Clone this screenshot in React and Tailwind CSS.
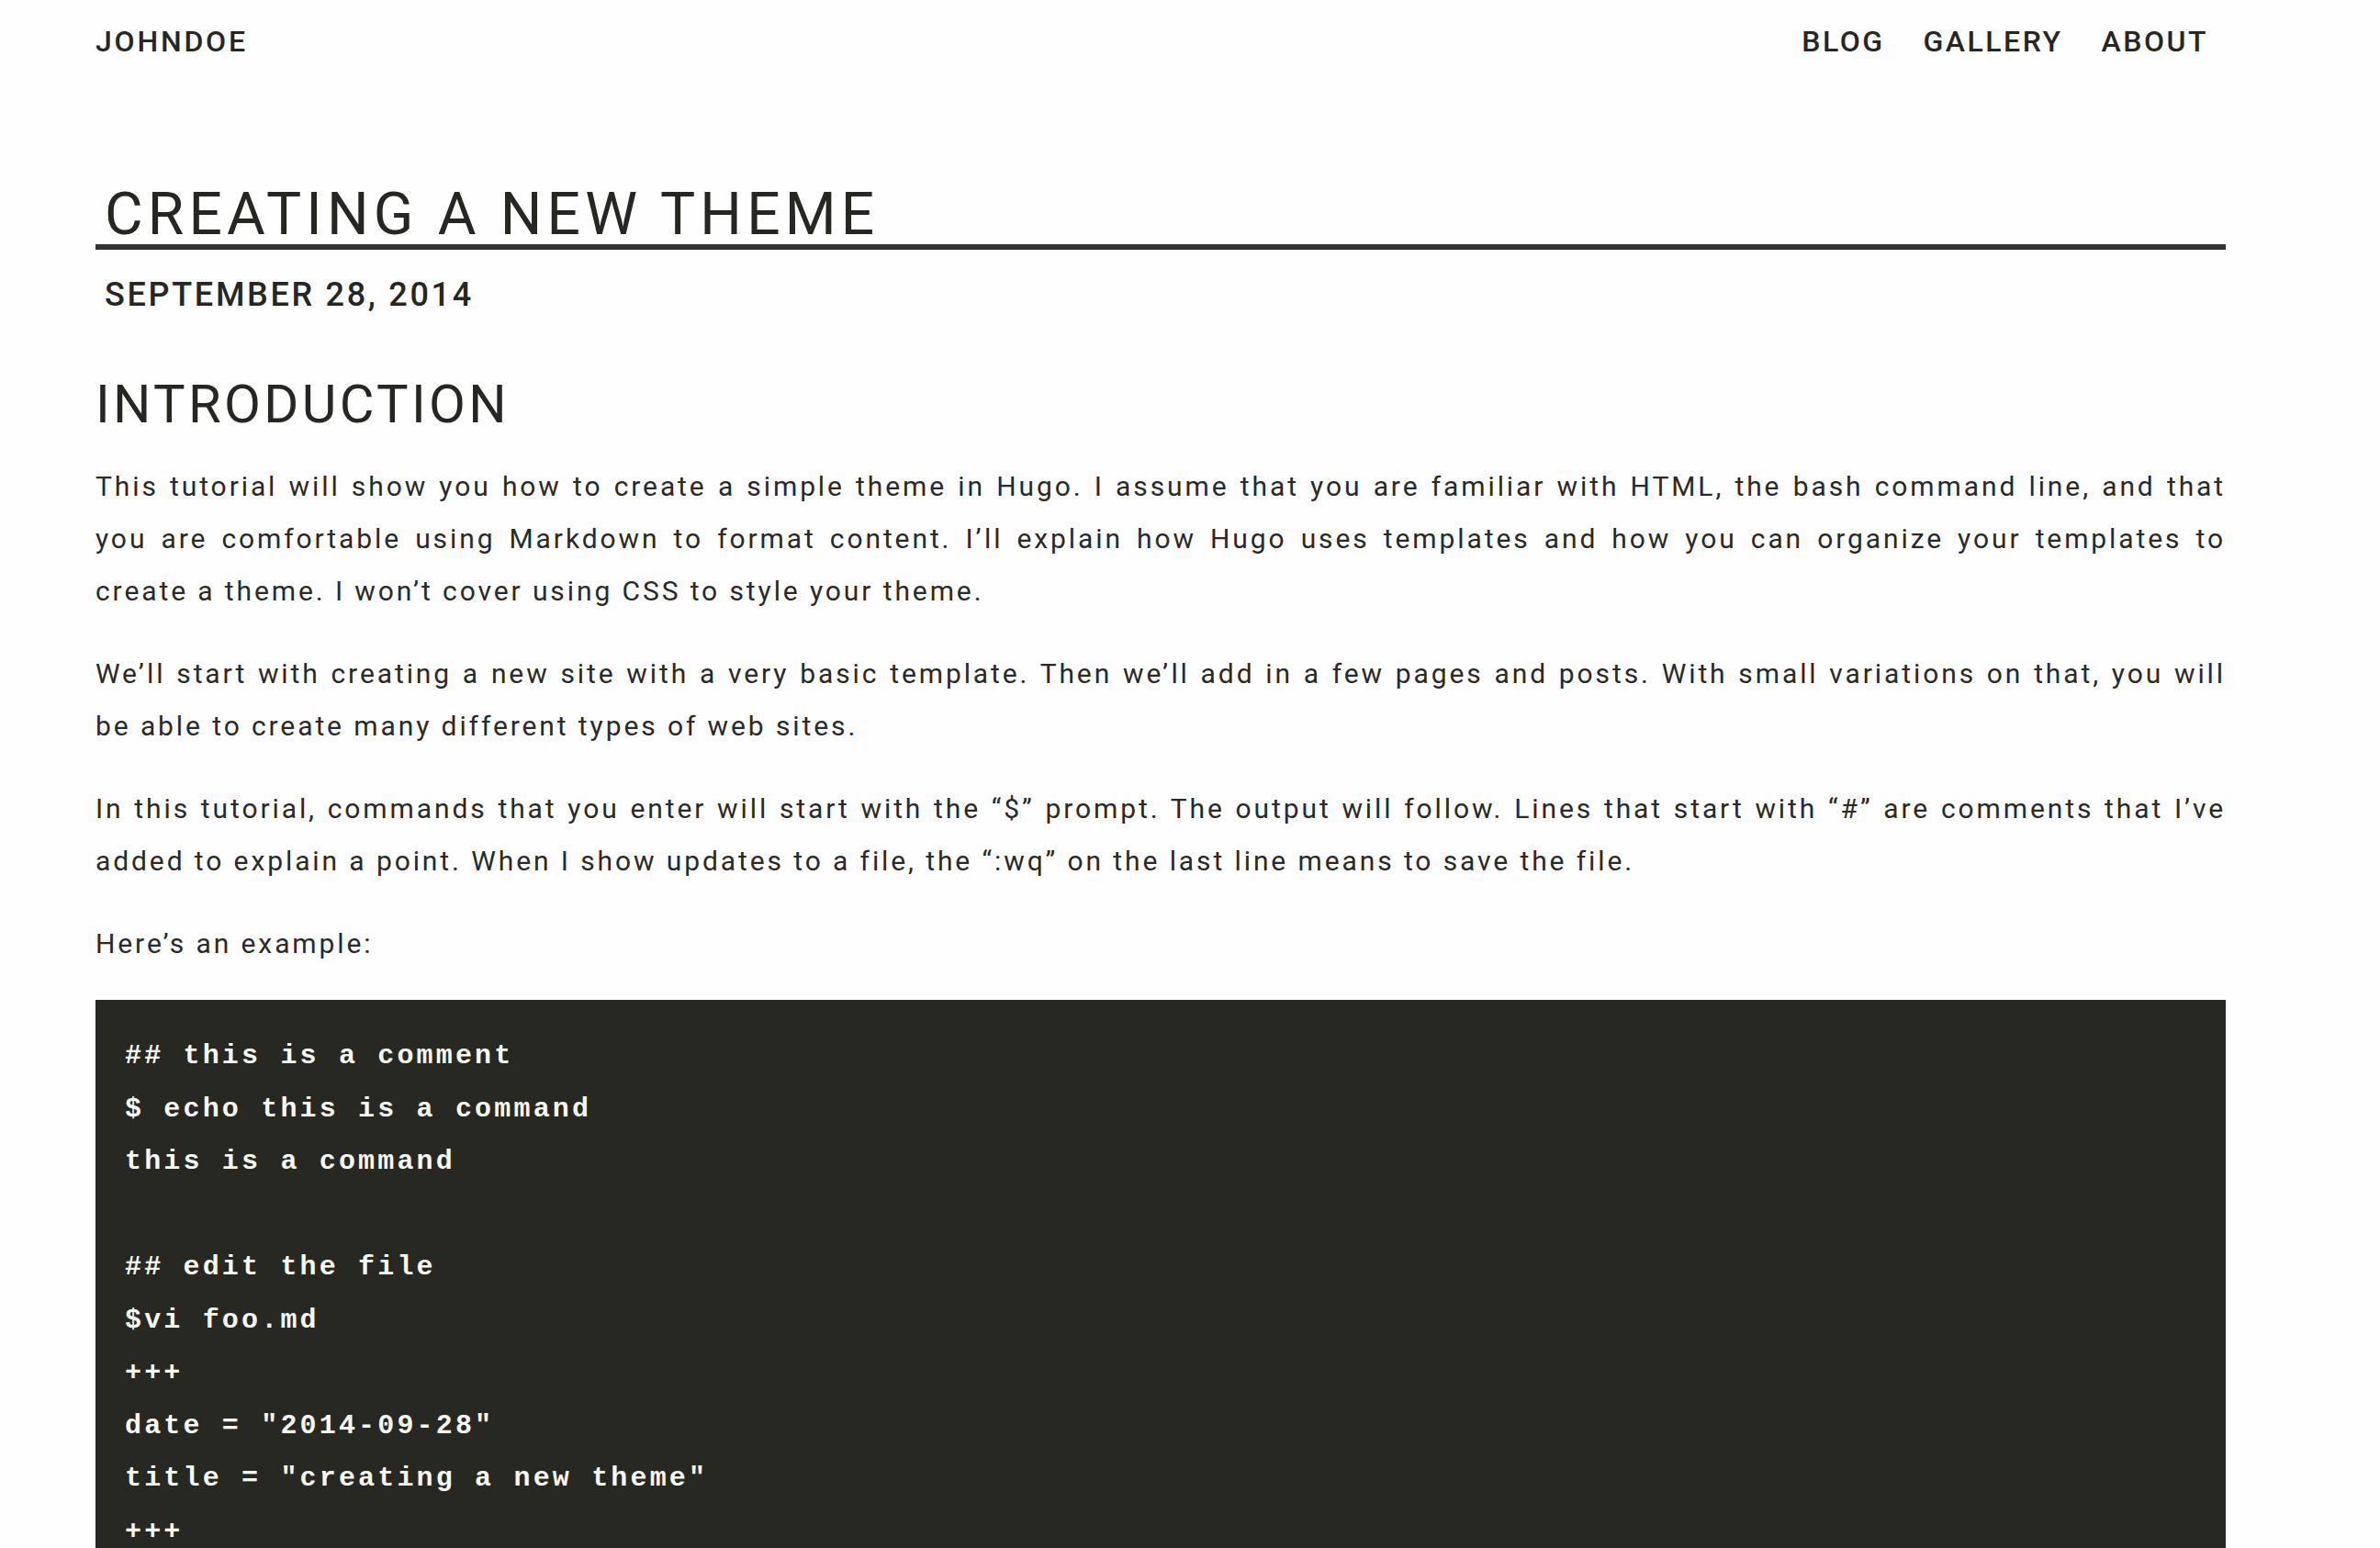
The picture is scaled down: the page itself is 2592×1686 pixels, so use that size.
import React from "react";

/* ==================== DATA ==================== */
const NAV = ["BLOG", "GALLERY", "ABOUT"];

const CODE = `## this is a comment
$ echo this is a command
this is a command

## edit the file
$vi foo.md
+++
date = "2014-09-28"
title = "creating a new theme"
+++`;

const FONT = { fontFamily: "Roboto, 'Liberation Sans', sans-serif" };

/* ==================== APP ==================== */
export default function App() {
  return (
    <div className="min-h-screen bg-[#fefefe] text-[#2a2a27]" style={FONT}>
      <div className="ml-[104px] w-[2320px] pb-20">
        {/* Header */}
        <header className="h-[90px] flex items-center justify-between pr-[19px]">
          <a className="text-[32px] font-medium tracking-[2.8px] leading-none text-[#262622]">
            JOHNDOE
          </a>
          <nav className="flex items-center gap-[42px]">
            {NAV.map((item) => (
              <a
                key={item}
                className="text-[32px] font-medium tracking-[2.5px] leading-none text-[#262622]"
              >
                {item}
              </a>
            ))}
          </nav>
        </header>

        {/* Title */}
        <h1 className="mt-[112px] pl-[10px] text-[64px] leading-none font-normal tracking-[5.2px] text-[#262622] border-b-[6px] border-[#333333]">
          CREATING A NEW THEME
        </h1>
        <p className="mt-[31px] pl-[10px] text-[36px] leading-none font-medium tracking-[2.7px] text-[#262622]">
          SEPTEMBER 28, 2014
        </p>

        {/* Intro */}
        <h2 className="mt-[72px] text-[58px] leading-none font-normal tracking-[3.35px] text-[#262622]">
          INTRODUCTION
        </h2>

        <div className="mt-[32px] text-[30px] leading-[57px] tracking-[2.9px] text-justify flex flex-col gap-[33px]">
          <p>
            This tutorial will show you how to create a simple theme in Hugo. I
            assume that you are familiar with HTML, the bash command line, and
            that you are comfortable using Markdown to format content. I’ll
            explain how Hugo uses templates and how you can organize your
            templates to create a theme. I won’t cover using CSS to style your
            theme.
          </p>
          <p>
            We’ll start with creating a new site with a very basic template.
            Then we’ll add in a few pages and posts. With small variations on
            that, you will be able to create many different types of web sites.
          </p>
          <p>
            In this tutorial, commands that you enter will start with the “$”
            prompt. The output will follow. Lines that start with “#” are
            comments that I’ve added to explain a point. When I show updates to
            a file, the “:wq” on the last line means to save the file.
          </p>
          <p>Here’s an example:</p>

          {/* Code */}
          <pre
            className="bg-[#282823] text-[#f8f8f2] pl-[32px] pr-8 pt-[33px] pb-[32px] text-[30px] leading-[57.5px] font-bold tracking-[3.17px] whitespace-pre text-left"
            style={{ fontFamily: "'Liberation Mono', 'Courier New', monospace" }}
          >
            {CODE}
          </pre>
        </div>
      </div>
    </div>
  );
}
